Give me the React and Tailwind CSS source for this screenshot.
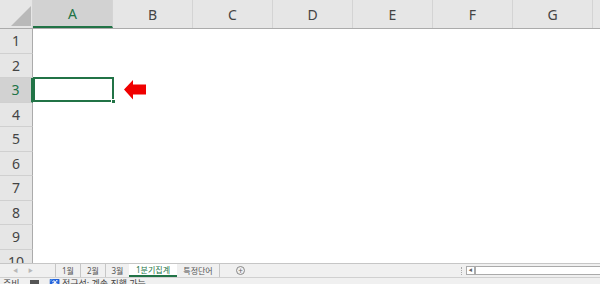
import React from 'react';

const COLS = ['A', 'B', 'C', 'D', 'E', 'F', 'G', 'H'];
const ROWS = [1, 2, 3, 4, 5, 6, 7, 8, 9, 10];
const SHEETS = [
  { name: '1월', w: 'w-[25px]' },
  { name: '2월', w: 'w-[25px]' },
  { name: '3월', w: 'w-[24px]' },
  { name: '1분기집계', w: 'w-[48px]', active: true },
  { name: '특정단어', w: 'w-[43px]', last: true },
];

const font = { fontFamily: '"Noto Sans", "Noto Sans CJK KR", sans-serif' };

function ColumnHeader({ name }) {
  const selected = name === 'A';
  return (
    <div
      className={`w-[80px] shrink-0 h-full flex items-center justify-center text-[14px] border-r border-[#d4d4d4] ${
        selected ? 'bg-[#d2d2d2] text-[#217346] border-b-2 border-b-[#217346]' : 'text-[#444]'
      }`}
    >
      {name}
    </div>
  );
}

function RowHeader({ n }) {
  const selected = n === 3;
  return (
    <div
      className={`h-[24.5px] shrink-0 flex items-center justify-center text-[14px] border-b border-[#d0d0d0] ${
        selected ? 'bg-[#d2d2d2] text-[#217346] border-r-2 border-r-[#217346]' : 'bg-[#e6e6e6] text-[#444] border-r border-r-[#ababab]'
      }`}
    >
      {n}
    </div>
  );
}

export default function App() {
  return (
    <div className="w-[600px] h-[284px] overflow-hidden flex flex-col bg-white" style={font}>
      {/* column headers */}
      <div className="h-[29px] shrink-0 flex bg-[#e6e6e6] border-b border-[#ababab]">
        <div className="w-[33px] shrink-0 h-full relative border-r border-[#d4d4d4]">
          <div className="absolute right-[1px] bottom-[2px] w-0 h-0 border-l-[20px] border-l-transparent border-b-[20px] border-b-[#b9b9b9]" />
        </div>
        {COLS.map((c) => (
          <ColumnHeader key={c} name={c} />
        ))}
      </div>

      {/* grid body */}
      <div className="h-[234px] shrink-0 flex overflow-hidden">
        <div className="w-[33px] shrink-0 flex flex-col">
          {ROWS.map((r) => (
            <RowHeader key={r} n={r} />
          ))}
        </div>
        <div className="flex-1 relative bg-white">
          {/* active cell */}
          <div className="absolute left-0 top-[48px] w-[81px] h-[25px] border-2 border-[#217346]">
            <div className="absolute -right-[4px] -bottom-[4px] w-[5px] h-[5px] bg-[#217346] border border-white" />
          </div>
          {/* red arrow */}
          <svg className="absolute left-[90px] top-[50px]" width="24" height="22" viewBox="0 0 24 22">
            <path d="M1 10.5 L10 1 L10 5.5 L23 5.5 L23 15.5 L10 15.5 L10 20.5 Z" fill="#f00000" />
          </svg>
        </div>
      </div>

      {/* sheet tabs */}
      <div className="h-[14px] shrink-0 flex items-center bg-[#f0f0f0] border-t border-[#c6c6c6] text-[8px] text-[#555]">
        <div className="w-[55px] shrink-0 flex items-center gap-[10px] pl-[13px] text-[#b8b8b8] text-[5px]">
          <span>◀</span>
          <span>▶</span>
        </div>
        {SHEETS.map((s) => (
          <div
            key={s.name}
            className={`${s.w} shrink-0 h-full flex items-center justify-center leading-none ${
              s.active
                ? 'bg-white text-[#217346] border-b-2 border-[#217346]'
                : 'border-l border-[#c6c6c6]'
            } ${s.last ? 'border-r border-l-0' : ''}`}
          >
            {s.name}
          </div>
        ))}
        <div className="ml-[16px] w-[9px] h-[9px] shrink-0 rounded-full border border-[#888] flex items-center justify-center text-[8px] leading-none text-[#666]">
          +
        </div>
        <div className="flex-1" />
        <div className="w-[1px] h-[8px] border-l border-dotted border-[#aaa] mr-[4px]" />
        <div className="w-[9px] h-[9px] bg-white border border-[#aaa] flex items-center justify-center text-[4px] text-[#666]">
          ◀
        </div>
        <div className="w-[125px] h-[9px] bg-white border-y border-l border-[#aaa]" />
      </div>

      {/* status bar */}
      <div className="h-[7px] shrink-0 overflow-hidden bg-[#f0f0f0] border-t border-[#d0d0d0]">
        <div className="flex items-start gap-[10px] pl-[3px] text-[9px] text-[#444] leading-[12px]">
          <span>준비</span>
          <span className="w-[9px] h-[8px] mt-[2px] bg-[#555]" />
          <span>♿ 접근성: 계속 진행 가능</span>
        </div>
      </div>
    </div>
  );
}
